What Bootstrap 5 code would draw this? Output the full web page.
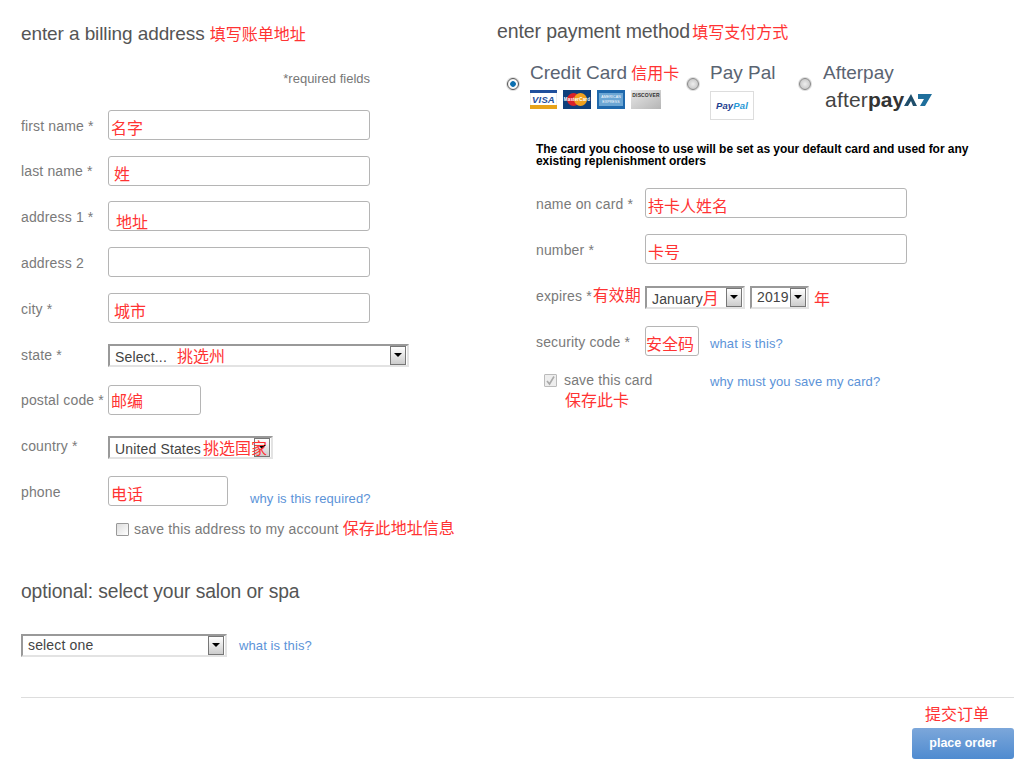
<!DOCTYPE html>
<html lang="en"><head><meta charset="utf-8"><title>Checkout</title>
<link href="https://cdn.jsdelivr.net/npm/bootstrap@5.3.0/dist/css/bootstrap.min.css" rel="stylesheet">
<style>
html,body{height:770px;overflow:hidden}
body{font-family:"Liberation Sans",Arial,sans-serif;color:#7a7a7a;font-size:14px;letter-spacing:.15px;background:#fff}
.zh{font-family:"Noto Sans CJK SC","Liberation Sans",sans-serif;color:#f33;font-size:16px;line-height:1;font-weight:400;letter-spacing:0}
.page{width:1032px;height:770px;padding:0 18px 0 21px}
.cols{height:697px}
.leftcol{width:476px}
.ttl{font-size:19px;line-height:24px;color:#555;margin:0;font-weight:400;letter-spacing:-.1px;white-space:nowrap}
.t1{padding-top:22px}
.t2{padding-top:19px;font-size:19.5px}
.t2 .zh{margin-left:2px}
.req{font-size:13px;letter-spacing:0;color:#777;width:349px;text-align:right;margin-top:25px;margin-bottom:24px;line-height:15px}
.frow{display:flex;align-items:flex-start}
.flabel{width:87px;flex:none;line-height:18px;padding-top:7px;white-space:nowrap}
.rlabel{width:109px;flex:none;line-height:18px;padding-top:7px;white-space:nowrap}
.lab6{padding-top:6px}.lab2{padding-top:2px}.lab1{padding-top:1px}.lab0{padding-top:0}
.h46{height:46px}.h45{height:45px}.h51{height:51px}.h41{height:41px}.h40{height:40px}.h52{height:52px}
.tbox{border:1px solid #b5b5b5;border-radius:3px;height:30px;width:262px;background:#fff;padding:5px 2px 0;flex:none;display:block;white-space:nowrap}
.w93{width:93px}.w120{width:120px}.w54{width:54px;padding-left:0;padding-right:0}
.pl5{padding-left:5px}.pl7{padding-left:7px}.pt7{padding-top:8px}.pt10{padding-top:11px}.pt5{padding-top:6px}
.selbox{position:relative;height:23px;flex:none;border-style:solid;border-width:2px;border-color:#999 #e3e3e3 #e3e3e3 #999;background:#fff;padding:1px 5px;font-size:14px;letter-spacing:.15px;line-height:17px;color:#444;white-space:nowrap;display:block}
.selbox .zh{position:relative;z-index:1}
.selbtn{position:absolute;right:1px;top:0;width:16px;height:19px;border:1px solid #777;background:linear-gradient(#fff,#ccc)}
.selbtn::after{content:"";position:absolute;left:3px;top:6px;border-style:solid;border-width:4px 4px 0 4px;border-color:#000 transparent transparent}
.s301{width:301px}.s165{width:165px}.s207{width:206px}.s99{width:100px}.s59{width:59px}
.gap5{margin-left:5px}.gap1{margin-left:1px}.gap2{margin-left:2px}.gap10{margin-left:10px}
.lnk{color:#5c93d8;font-size:13px;letter-spacing:.1px;text-decoration:none;line-height:15px;white-space:nowrap}
.ml22{margin-left:22px}.ml11{margin-left:11px}.ml12{margin-left:12px}.top15{margin-top:15px}.top10{margin-top:10px}.top3{margin-top:3px}.top4{margin-top:4px}
.chk{width:13px;height:13px;border:1px solid #999;background:linear-gradient(135deg,#ddd,#fff);flex:none;display:block;border-radius:1px}
.chk2{border-color:#bbb;background:#eee;margin-top:3px}
.chk2 svg{display:block}
.savea{margin:-3px 0 0 95px;white-space:nowrap}
.savea .txt{margin-left:5px}
.opt{padding-top:40px;font-size:19.3px}
.optsel{margin-top:30px}
.rightcol{width:517px}
.payopts{margin-top:18px;height:82px}
.rad{width:12px;height:12px;border-radius:50%;border:1px solid #888;background:radial-gradient(#eee,#bbb);flex:none;display:block;box-shadow:0 0 0 1px #ddd;margin-top:17px}
.rad.on{background:radial-gradient(#0b6fb0 0 35%,#fff 45%,#ddd 100%);border-color:#555;margin-left:10px}
.pay1{margin-left:11px;width:157px}
.pay2{margin-left:11px;width:89px}
.pay3{margin-left:12px}
.pname{font-size:19px;line-height:24px;color:#5a6472;white-space:nowrap;letter-spacing:0}
.pname .zh{margin-left:4px}
.cards{margin-top:5px;gap:6px}
.note{margin:0 0 0 39px;width:445px;font-size:12px;line-height:12px;color:#000;font-weight:700;letter-spacing:-.05px}
.rform{margin-left:39px;margin-top:21px}
.savec{margin-left:8px;margin-top:-1px;line-height:16px}
.savecw{width:146px;margin-left:7px;padding-top:1px}
.savecw .zh{margin:3px 0 0 1px}
.foot{border-top:1px solid #ddd;height:73px}
.footzh{padding:7px 25px 0 0;margin-bottom:7px}
.place{width:102px;height:31px;border:0;border-radius:3px;background:linear-gradient(#7ca7da,#4f8bd0);color:#fff;font-weight:700;font-size:12.5px;line-height:31px;padding:0;text-align:center}
.pp{width:44px;height:29px;margin-top:6px;border:1px solid #ddd;display:flex;align-items:center;justify-content:center;font:italic 700 9.5px "Liberation Sans",sans-serif;color:#1f3f8f}
.pp em{color:#2a9ad6}
svg text{font-family:"Liberation Sans",sans-serif}
.apayw{margin:4px 0 0 2px}
.apay{font-size:21px;line-height:22px;color:#444;letter-spacing:.2px;white-space:nowrap}
.apay b{font-weight:700;color:#333;letter-spacing:0}
</style></head><body>
<div class="page">
<div class="cols d-flex">
 <div class="leftcol">
  <h2 class="ttl t1">enter a billing address <span class="zh">填写账单地址</span></h2>
  <div class="req">*required fields</div>
  <div class="frow h46"><div class="flabel">first name *</div><div class="tbox pt7"><span class="zh">名字</span></div></div>
  <div class="frow h45"><div class="flabel lab6">last name *</div><div class="tbox pt7 pl5"><span class="zh">姓</span></div></div>
  <div class="frow h46"><div class="flabel">address 1 *</div><div class="tbox pt10 pl7"><span class="zh">地址</span></div></div>
  <div class="frow h46"><div class="flabel">address 2</div><div class="tbox"></div></div>
  <div class="frow h51"><div class="flabel">city *</div><div class="tbox pt7 pl5"><span class="zh">城市</span></div></div>
  <div class="frow h41"><div class="flabel lab2">state *</div><div class="selbox s301">Select...<span class="zh gap10">挑选州</span><i class="selbtn"></i></div></div>
  <div class="frow h51"><div class="flabel lab6">postal code *</div><div class="tbox w93 pt5"><span class="zh">邮编</span></div></div>
  <div class="frow h40"><div class="flabel lab1">country *</div><div class="selbox s165">United States<span class="zh gap2">挑选国家</span><i class="selbtn"></i></div></div>
  <div class="frow h46"><div class="flabel">phone</div><div class="tbox w120 pt7"><span class="zh">电话</span></div><a class="lnk ml22 top15" href="#">why is this required?</a></div>
  <div class="d-flex align-items-center savea"><i class="chk"></i><span class="txt">save this address to my account <span class="zh">保存此地址信息</span></span></div>
  <h2 class="ttl opt">optional: select your salon or spa</h2>
  <div class="d-flex align-items-center optsel"><div class="selbox s207">select one<i class="selbtn"></i></div><a class="lnk ml12" href="#">what is this?</a></div>
 </div>
 <div class="rightcol">
  <h2 class="ttl t2">enter payment method<span class="zh">填写支付方式</span></h2>
  <div class="payopts d-flex">
   <i class="rad on"></i>
   <div class="pay1">
    <div class="pname">Credit Card<span class="zh">信用卡</span></div>
    <div class="d-flex cards">
     <svg width="27" height="19" viewBox="0 0 27 19"><rect width="27" height="19" fill="#fff" stroke="#ddd"/><rect y="15" width="27" height="4" fill="#e8a318"/><rect width="27" height="3" fill="#1f4f9c"/><text x="13.5" y="13" text-anchor="middle" font-size="9.5" font-weight="700" font-style="italic" fill="#1f4f9c">VISA</text></svg>
     <svg width="28" height="19" viewBox="0 0 28 19"><rect width="28" height="19" fill="#0e3f7c"/><circle cx="10.500" cy="9.500" r="6.500" fill="#d9222a"/><circle cx="17.500" cy="9.500" r="6.500" fill="#f0a11e"/><text x="14" y="11" text-anchor="middle" font-size="4.500" font-weight="700" fill="#fff">MasterCard</text></svg>
     <svg width="28" height="19" viewBox="0 0 28 19"><rect width="28" height="19" fill="#1f69ad"/><rect x="2" y="3" width="24" height="13" fill="#6ba6d4"/><text x="14" y="8" text-anchor="middle" font-size="3.500" fill="#fff">AMERICAN</text><text x="14" y="13" text-anchor="middle" font-size="3.500" fill="#fff">EXPRESS</text></svg>
     <svg width="30" height="19" viewBox="0 0 30 19"><defs><linearGradient id="dg" x1="0" y1="0" x2="1" y2="1"><stop offset="0" stop-color="#e8e8e8"/><stop offset="1" stop-color="#b5b5b5"/></linearGradient></defs><rect width="30" height="19" fill="url(#dg)"/><text x="15" y="7" text-anchor="middle" font-size="5" font-weight="700" fill="#333">DISCOVER</text></svg>
    </div>
   </div>
   <i class="rad"></i>
   <div class="pay2">
    <div class="pname">Pay Pal</div>
    <div class="pp">Pay<em>Pal</em></div>
   </div>
   <i class="rad"></i>
   <div class="pay3">
    <div class="pname">Afterpay</div>
    <div class="d-flex align-items-center apayw"><span class="apay">after<b>pay</b></span>
     <svg width="28" height="14" viewBox="0 0 28 14"><path d="M0 13 7 1l6 12H9L7 8l-3 5z" fill="#1f4e6b"/><path d="M14 1h14l-7 12h-5l4-7h-6z" fill="#1f6f9c"/></svg></div>
   </div>
  </div>
  <p class="note">The card you choose to use will be set as your default card and used for any existing replenishment orders</p>
  <div class="rform">
   <div class="frow h46"><div class="rlabel">name on card *</div><div class="tbox pt7"><span class="zh">持卡人姓名</span></div></div>
   <div class="frow h52"><div class="rlabel">number *</div><div class="tbox pt7"><span class="zh">卡号</span></div></div>
   <div class="frow h40"><div class="rlabel lab0">expires *<span class="zh gap1">有效期</span></div><div class="selbox s99">January<span class="zh">月</span><i class="selbtn"></i></div><div class="selbox s59 gap5">2019<i class="selbtn"></i></div><span class="zh gap5 top4">年</span></div>
   <div class="frow h46"><div class="rlabel">security code *</div><div class="tbox w54 pt7"><span class="zh">安全码</span></div><a class="lnk ml11 top10" href="#">what is this?</a></div>
   <div class="d-flex savec"><i class="chk chk2"><svg width="11" height="11" viewBox="0 0 11 11"><path d="M2 6l2.500 3L9 1.500" fill="none" stroke="#aaa" stroke-width="1.600"/></svg></i><div class="savecw">save this card<div class="zh">保存此卡</div></div><a class="lnk top3" href="#">why must you save my card?</a></div>
  </div>
 </div>
</div>
<div class="foot d-flex flex-column align-items-end">
 <div class="zh w-100 text-end footzh">提交订单</div>
 <button class="place" type="button">place order</button>
</div>
</div>
</body></html>
